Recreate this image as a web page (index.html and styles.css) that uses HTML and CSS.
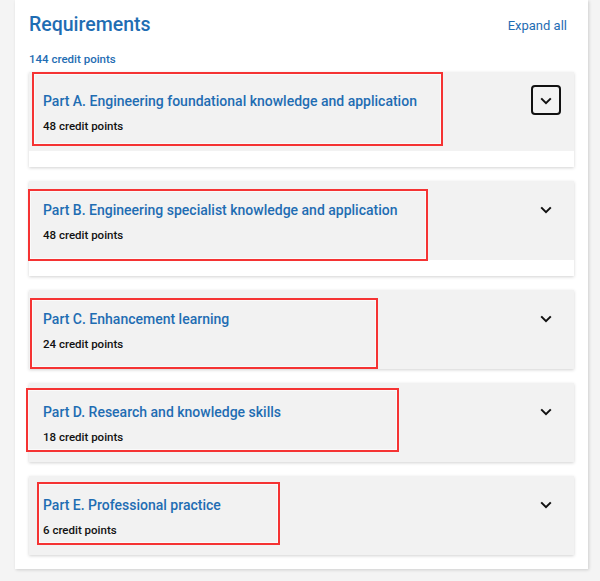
FILE: index.html
```html
<!DOCTYPE html>
<html lang="en">
<head>
<meta charset="utf-8">
<title>Requirements</title>
<link rel="stylesheet" href="styles.css">
</head>
<body>
<div class="card">
  <div class="card-head">
    <h2 class="title">Requirements</h2>
    <a class="expand" href="#">Expand all</a>
  </div>
  <div class="total">144 credit points</div>
  <div class="list">
    <section class="item open">
      <div class="item-head">
        <div class="row">
          <h3 class="item-title">Part A. Engineering foundational knowledge and application</h3>
          <button class="toggle focused" aria-label="Toggle"><svg width="12" height="8" viewBox="0 0 12 8"><path d="M1.2 1.4 L6 6.2 L10.8 1.4" fill="none" stroke="#111" stroke-width="2"/></svg></button>
        </div>
        <div class="credits">48 credit points</div>
      </div>
      <div class="item-body"></div>
      <span class="mark mark-a"></span>
    </section>
    <section class="item open">
      <div class="item-head">
        <div class="row">
          <h3 class="item-title">Part B. Engineering specialist knowledge and application</h3>
          <button class="toggle" aria-label="Toggle"><svg width="12" height="8" viewBox="0 0 12 8"><path d="M1.2 1.4 L6 6.2 L10.8 1.4" fill="none" stroke="#111" stroke-width="2"/></svg></button>
        </div>
        <div class="credits">48 credit points</div>
      </div>
      <div class="item-body"></div>
      <span class="mark mark-b"></span>
    </section>
    <section class="item">
      <div class="item-head">
        <div class="row">
          <h3 class="item-title">Part C. Enhancement learning</h3>
          <button class="toggle" aria-label="Toggle"><svg width="12" height="8" viewBox="0 0 12 8"><path d="M1.2 1.4 L6 6.2 L10.8 1.4" fill="none" stroke="#111" stroke-width="2"/></svg></button>
        </div>
        <div class="credits">24 credit points</div>
      </div>
      <span class="mark mark-c"></span>
    </section>
    <section class="item">
      <div class="item-head">
        <div class="row">
          <h3 class="item-title">Part D. Research and knowledge skills</h3>
          <button class="toggle" aria-label="Toggle"><svg width="12" height="8" viewBox="0 0 12 8"><path d="M1.2 1.4 L6 6.2 L10.8 1.4" fill="none" stroke="#111" stroke-width="2"/></svg></button>
        </div>
        <div class="credits">18 credit points</div>
      </div>
      <span class="mark mark-d"></span>
    </section>
    <section class="item">
      <div class="item-head">
        <div class="row">
          <h3 class="item-title">Part E. Professional practice</h3>
          <button class="toggle" aria-label="Toggle"><svg width="12" height="8" viewBox="0 0 12 8"><path d="M1.2 1.4 L6 6.2 L10.8 1.4" fill="none" stroke="#111" stroke-width="2"/></svg></button>
        </div>
        <div class="credits">6 credit points</div>
      </div>
      <span class="mark mark-e"></span>
    </section>
  </div>
</div>
</body>
</html>
```
FILE: styles.css
```css
* { box-sizing: border-box; }
html, body { margin: 0; padding: 0; }
body {
  background: #f4f4f4;
  font-family: Roboto, "Liberation Sans", Arial, sans-serif;
  color: #111;
}
.card {
  margin: 0 12px 12px 15px;
  background: #fff;
  padding: 12px 14px 14px 14px;
  box-shadow: 1px 1px 3px rgba(0,0,0,0.16);
}
.card-head {
  display: flex;
  justify-content: space-between;
  align-items: center;
}
.title {
  margin: 0;
  font-size: 19.5px;
  line-height: 26px;
  font-weight: 500;
  color: #1f6db3;
}
.expand {
  font-size: 13px;
  color: #1f6db3;
  text-decoration: none;
  margin-right: 7px;
}
.total {
  margin-top: 13px;
  font-size: 11.5px;
  line-height: 16px;
  font-weight: 500;
  color: #1f6db3;
}
.list {
  margin-top: 5px;
  display: flex;
  flex-direction: column;
  gap: 14px;
}
.item {
  position: relative;
  background: #fff;
  box-shadow: 0 1px 3px rgba(0,0,0,0.18);
}
.item-head {
  background: #f2f2f2;
  padding: 13px 13px 17px 14px;
  height: 79px;
}
.row {
  display: flex;
  align-items: center;
  justify-content: space-between;
  height: 30px;
}
.item-title {
  margin: 0;
  font-size: 14px;
  line-height: 20px;
  font-weight: 500;
  color: #1f6db3;
  position: relative;
  top: 1px;
}
.credits {
  margin-top: 3px;
  font-size: 11.5px;
  line-height: 16px;
  font-weight: 500;
  color: #111;
}
.toggle {
  width: 30px;
  height: 30px;
  padding: 0;
  border: 2px solid transparent;
  border-radius: 4px;
  background: transparent;
  display: flex;
  align-items: center;
  justify-content: center;
  flex: none;
}
.toggle.focused { border-color: #111; }
.toggle svg { display: block; margin-top: 1px; }
.item-body { height: 16px; background: #fff; }
.mark {
  position: absolute;
  border: 2px solid #f53333;
  box-shadow: inset 0 0 0 1px rgba(255,255,255,0.6);
  pointer-events: none;
}
.mark-a { left: 3px; top: 0; width: 411px; height: 74px; }
.mark-b { left: -1px; top: 8px; width: 400px; height: 72px; }
.mark-c { left: 1px; top: 8px; width: 348px; height: 71px; }
.mark-d { left: -3px; top: 5px; width: 373px; height: 64px; }
.mark-e { left: 8px; top: 6px; width: 243px; height: 63px; }
```
